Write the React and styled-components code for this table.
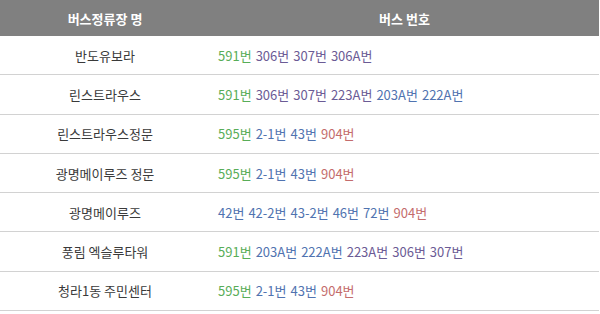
import React from "react";
import styled, { createGlobalStyle } from "styled-components";

const Global = createGlobalStyle`
  html, body { margin: 0; padding: 0; background: #fff; }
  body { font-family: "Noto Sans CJK KR", "Noto Sans", sans-serif; }
`;

const Table = styled.table`
  width: 599px;
  border-collapse: collapse;
  table-layout: fixed;
  font-size: 13px;
  color: #3a3a3a;
`;

const HeadCell = styled.th`
  background: #808080;
  color: #fff;
  font-weight: 700;
  height: 36px;
  padding: 0;
  text-align: center;
  width: ${(p) => p.$w};
`;

const Row = styled.tr`
  border-bottom: 1px solid #d2d2d2;
`;

const NameCell = styled.td`
  height: 38.3px;
  padding: 0;
  text-align: center;
  color: #3a3a3a;
`;

const BusCell = styled.td`
  height: 38.3px;
  padding: 0 0 0 8px;
  text-align: left;
`;

const colors = {
  g: "#58ad58",
  p: "#6b5b95",
  b: "#5073b0",
  r: "#c46c6c",
};

const Bus = styled.span`
  color: ${(p) => colors[p.$c]};
  margin-right: 4px;
`;

const data = [
  ["반도유보라", [["591", "g"], ["306", "p"], ["307", "p"], ["306A", "p"]]],
  ["린스트라우스", [["591", "g"], ["306", "p"], ["307", "p"], ["223A", "p"], ["203A", "b"], ["222A", "b"]]],
  ["린스트라우스정문", [["595", "g"], ["2-1", "b"], ["43", "b"], ["904", "r"]]],
  ["광명메이루즈 정문", [["595", "g"], ["2-1", "b"], ["43", "b"], ["904", "r"]]],
  ["광명메이루즈", [["42", "b"], ["42-2", "b"], ["43-2", "b"], ["46", "b"], ["72", "b"], ["904", "r"]]],
  ["풍림 엑슬루타워", [["591", "g"], ["203A", "b"], ["222A", "b"], ["223A", "p"], ["306", "p"], ["307", "p"]]],
  ["청라1동 주민센터", [["595", "g"], ["2-1", "b"], ["43", "b"], ["904", "r"]]],
];

export default function App() {
  return (
    <>
      <Global />
      <Table>
        <thead>
          <tr>
            <HeadCell $w="210px">버스정류장 명</HeadCell>
            <HeadCell>버스 번호</HeadCell>
          </tr>
        </thead>
        <tbody>
          {data.map(([name, buses]) => (
            <Row key={name}>
              <NameCell>{name}</NameCell>
              <BusCell>
                {buses.map(([n, c]) => (
                  <Bus key={n} $c={c}>{n}번</Bus>
                ))}
              </BusCell>
            </Row>
          ))}
        </tbody>
      </Table>
    </>
  );
}
